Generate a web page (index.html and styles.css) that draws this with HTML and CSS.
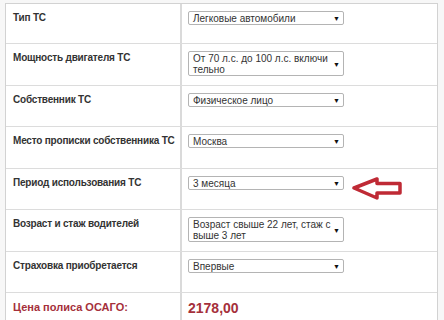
FILE: index.html
```html
<!DOCTYPE html>
<html lang="ru">
<head>
    <meta charset="UTF-8">
    <meta name="viewport" content="width=device-width, initial-scale=1.0">
    <title>Калькулятор ОСАГО</title>
    <link rel="stylesheet" href="styles.css">
</head>
<body>
    <div class="calc">
        <div class="row first">
            <div class="label">Тип ТС</div>
            <div class="value"><div class="select"><span>Легковые автомобили</span><i>▼</i></div></div>
        </div>
        <div class="row">
            <div class="label">Мощность двигателя ТС</div>
            <div class="value"><div class="select"><span>От 70 л.с. до 100 л.с. включи<br>тельно</span><i>▼</i></div></div>
        </div>
        <div class="row">
            <div class="label">Собственник ТС</div>
            <div class="value"><div class="select"><span>Физическое лицо</span><i>▼</i></div></div>
        </div>
        <div class="row">
            <div class="label">Место прописки собственника ТС</div>
            <div class="value"><div class="select"><span>Москва</span><i>▼</i></div></div>
        </div>
        <div class="row">
            <div class="label">Период использования ТС</div>
            <div class="value">
                <div class="select"><span>3 месяца</span><i>▼</i></div>
                <svg class="pointer" width="52" height="24" viewBox="0 0 52 24">
                    <path d="M2 11 L25 2 L25 6.5 L48 6.5 L48 16 L25 16 L25 21 Z" fill="#fff" stroke="#bf2a35" stroke-width="3.5" stroke-linejoin="round"/>
                </svg>
            </div>
        </div>
        <div class="row">
            <div class="label">Возраст и стаж водителей</div>
            <div class="value"><div class="select"><span>Возраст свыше 22 лет, стаж с<br>выше 3 лет</span><i>▼</i></div></div>
        </div>
        <div class="row">
            <div class="label">Страховка приобретается</div>
            <div class="value"><div class="select"><span>Впервые</span><i>▼</i></div></div>
        </div>
        <div class="row total">
            <div class="label">Цена полиса ОСАГО:</div>
            <div class="value"><span class="price">2178,00</span></div>
        </div>
    </div>
</body>
</html>
```

FILE: styles.css
```css
body { margin: 0; background: #f7f7f7; font-family: "Liberation Sans", Arial, sans-serif; color: #222; }
.calc { margin: 3px 6px 0 5px; border: 1px solid #d2d2d2; border-bottom: none; background: #fff; }
.row { display: grid; grid-template-columns: 176px 1fr; height: 41.5px; box-sizing: border-box; border-bottom: 1px solid #dcdcdc; }
.row.first { height: 40px; }
.label { padding: 8px 0 0 7px; font-size: 10px; font-weight: bold; line-height: 11px; white-space: nowrap; letter-spacing: -0.2px; border-right: 2px solid #dadada; color: #333; }
.value { display: flex; align-items: flex-start; padding: 7px 0 0 6px; }
.select { display: flex; align-items: center; justify-content: space-between; width: 156px; box-sizing: border-box; border: 1px solid #b4b4b4; border-radius: 2px; padding: 1px 3px 0 4px; font-size: 10px; line-height: 11px; color: #333; background: #fff; }
.select i { font-style: normal; font-size: 7px; color: #111; }
.pointer { margin: 1px 0 0 8px; }
.total { height: 30px; border-bottom: none; }
.total .label { color: #a5303b; font-size: 11px; padding-top: 9px; letter-spacing: 0; }
.price { color: #a5303b; font-weight: bold; font-size: 14px; line-height: 15px; padding-top: 1px; }
```
